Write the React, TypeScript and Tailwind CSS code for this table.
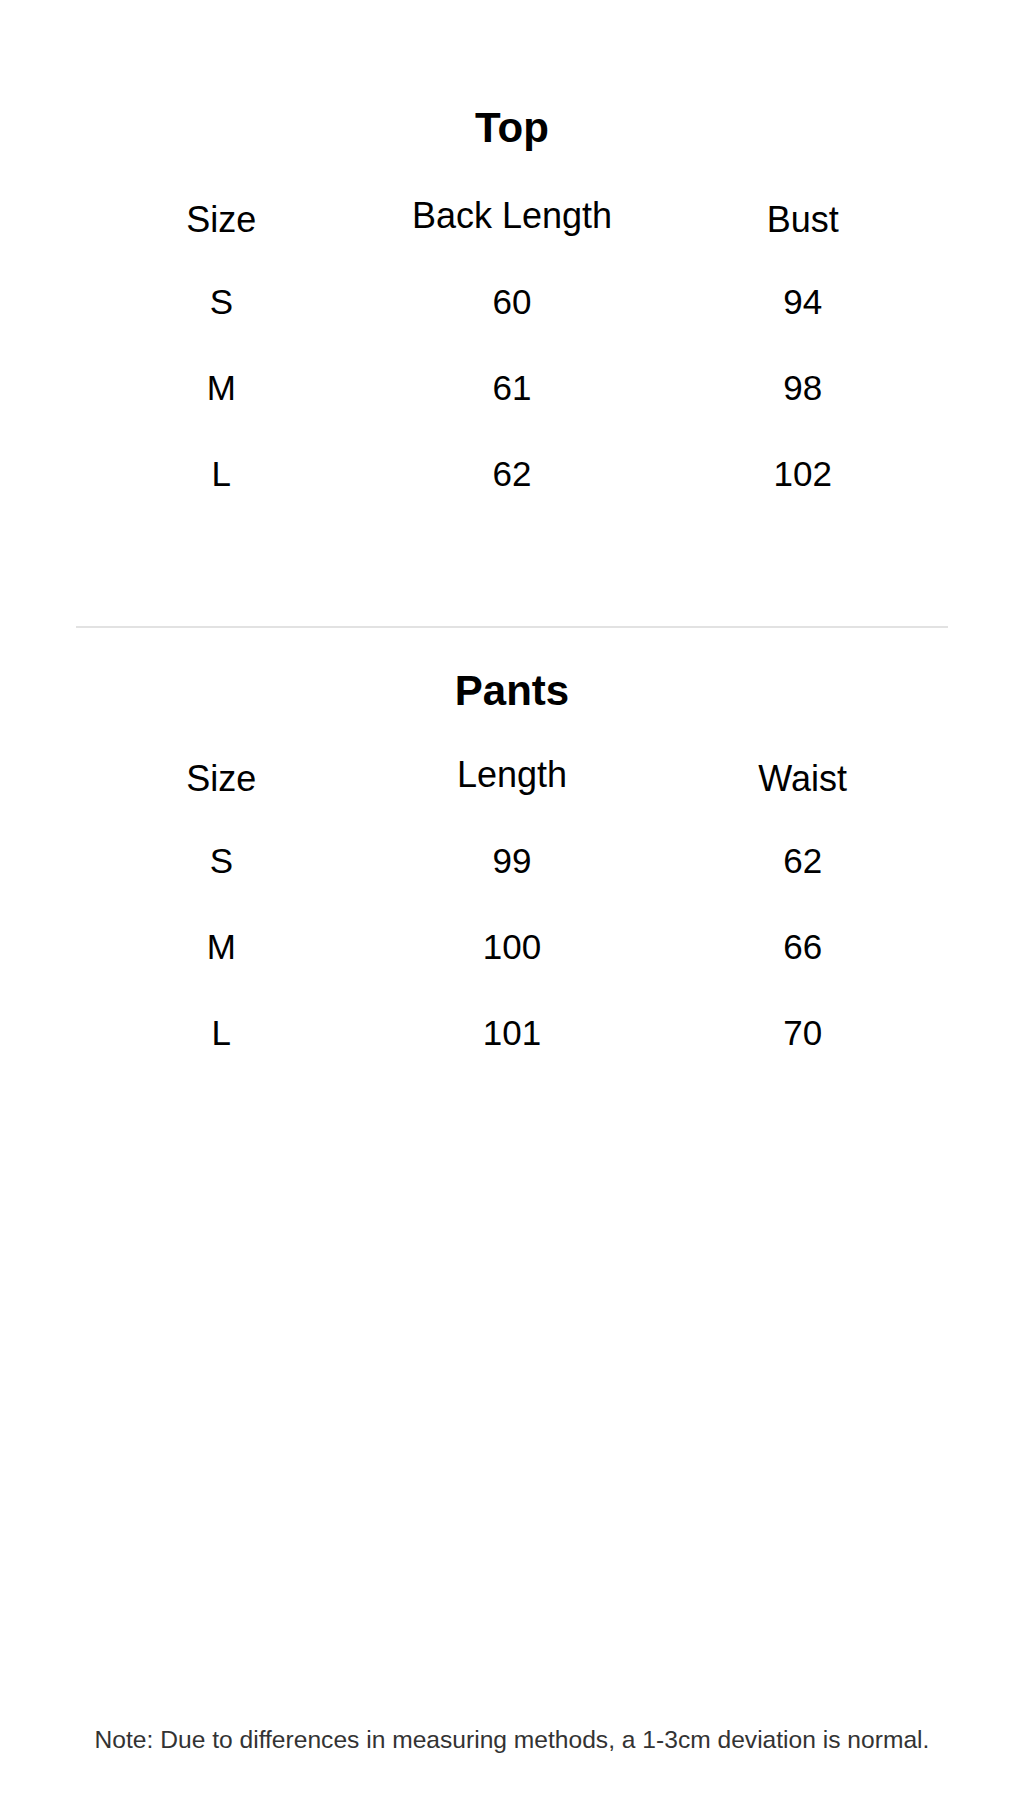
const sections = [
  {
    title: 'Top',
    columns: ['Size', 'Back Length', 'Bust'],
    rows: [
      ['S', '60', '94'],
      ['M', '61', '98'],
      ['L', '62', '102'],
    ],
  },
  {
    title: 'Pants',
    columns: ['Size', 'Length', 'Waist'],
    rows: [
      ['S', '99', '62'],
      ['M', '100', '66'],
      ['L', '101', '70'],
    ],
  },
];

function SizeTable({
  title,
  columns,
  rows,
  headerGap,
}: {
  title: string;
  columns: string[];
  rows: string[][];
  headerGap: string;
}) {
  return (
    <div>
      <h2 className="h-[46px] text-center text-[42px] font-bold leading-[46px] text-black">
        {title}
      </h2>
      {/* Header row: the middle label sits a little higher */}
      <div
        className={`${headerGap} grid h-[78px] grid-cols-3 items-center text-center text-[36px] text-black`}
      >
        {columns.map((col, i) => (
          <div key={col} className={i === 1 ? 'pb-[9px]' : ''}>
            {col}
          </div>
        ))}
      </div>
      {rows.map((row) => (
        <div
          key={row[0]}
          className="grid h-[86px] grid-cols-3 items-center text-center text-[35px] text-black"
        >
          {row.map((cell, i) => (
            <div key={i}>{cell}</div>
          ))}
        </div>
      ))}
    </div>
  );
}

export default function App() {
  return (
    <div
      className="flex h-[1820px] w-full flex-col bg-white px-[76px]"
      style={{ fontFamily: '"Liberation Sans", Arial, sans-serif' }}
    >
      <div className="pt-[105px]">
        <SizeTable {...sections[0]} headerGap="mt-[30px]" />
      </div>

      <div className="mt-[109px] h-[2px] bg-[#e2e2e2]" />

      <div className="pt-[40px]">
        <SizeTable {...sections[1]} headerGap="mt-[26px]" />
      </div>

      <p className="mt-auto mb-[66px] text-center text-[24.6px] leading-[28px] text-[#333333]">
        Note: Due to differences in measuring methods, a 1-3cm deviation is
        normal.
      </p>
    </div>
  );
}
